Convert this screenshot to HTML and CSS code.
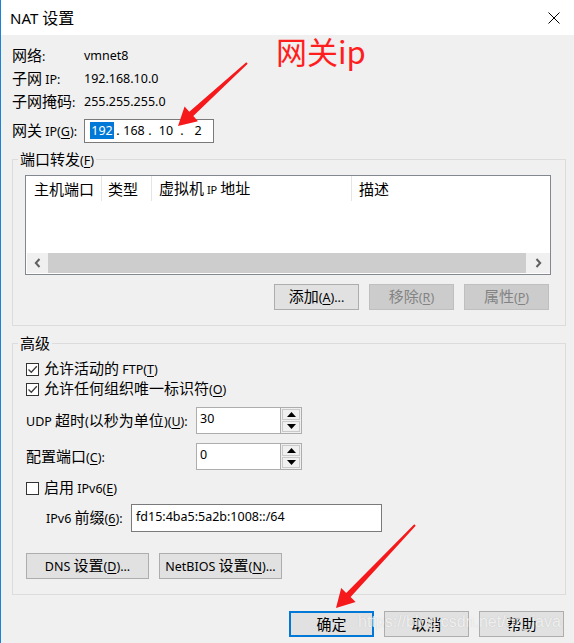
FILE: index.html
```html
<!DOCTYPE html>
<html lang="zh-CN">
<head>
<meta charset="utf-8">
<title>NAT 设置</title>
<link rel="stylesheet" href="styles.css">
</head>
<body>
<div class="win">
  <div class="titlebar">
    <span class="title">NAT <span class="ct">设置</span></span>
    <svg class="close" width="12" height="12" viewBox="0 0 12 12"><path d="M0.5 0.5 L11.5 11.5 M11.5 0.5 L0.5 11.5" stroke="#000" stroke-width="1" fill="none"/></svg>
  </div>

  <div class="info">
    <div class="row"><span class="lbl"><span class="c">网络</span>:</span><span>vmnet8</span></div>
    <div class="row"><span class="lbl"><span class="c">子网</span> IP:</span><span>192.168.10.0</span></div>
    <div class="row"><span class="lbl"><span class="c">子网掩码</span>:</span><span>255.255.255.0</span></div>
    <div class="row gw">
      <span class="lbl"><span class="c">网关</span> IP(<u>G</u>):</span>
      <div class="ipbox">
        <span class="oct"><span class="sel">192</span></span><span class="dot">.</span>
        <span class="oct">168</span><span class="dot">.</span>
        <span class="oct">10</span><span class="dot">.</span>
        <span class="oct">2</span>
      </div>
    </div>
  </div>

  <fieldset class="group g1">
    <legend><span class="c">端口转发</span>(<u>F</u>)</legend>
    <div class="gbody b1">
      <div class="list">
        <div class="lhead">
          <span class="col c1"><span class="c">主机端口</span></span>
          <span class="col c2"><span class="c">类型</span></span>
          <span class="col c3"><span><span class="c">虚拟机</span> IP <span class="c">地址</span></span></span>
          <span class="col c4"><span class="c">描述</span></span>
        </div>
        <div class="lspace"></div>
        <div class="hscroll">
          <span class="sbtn sl"><svg width="7" height="10" viewBox="0 0 7 10"><path d="M5.5 1 L1.8 5 L5.5 9" stroke="#606060" stroke-width="2" fill="none"/></svg></span>
          <span class="thumb"></span>
          <span class="sbtn sr"><svg width="7" height="10" viewBox="0 0 7 10"><path d="M1.5 1 L5.2 5 L1.5 9" stroke="#606060" stroke-width="2" fill="none"/></svg></span>
        </div>
      </div>
      <div class="btnrow">
        <span class="btn"><span><span class="c">添加</span>(<u>A</u>)...</span></span>
        <span class="btn dis"><span><span class="c">移除</span>(<u>R</u>)</span></span>
        <span class="btn dis"><span><span class="c">属性</span>(<u>P</u>)</span></span>
      </div>
    </div>
  </fieldset>

  <fieldset class="group g2">
    <legend><span class="c">高级</span></legend>
    <div class="gbody b2">
      <div class="chk r1"><span class="box"><svg width="11" height="11" viewBox="0 0 11 11"><path d="M1.5 5.5 L4.3 8.3 L9.8 2.2" stroke="#3c3c3c" stroke-width="1.3" fill="none"/></svg></span><span><span class="c">允许活动的</span> FTP(<u>T</u>)</span></div>
      <div class="chk"><span class="box"><svg width="11" height="11" viewBox="0 0 11 11"><path d="M1.5 5.5 L4.3 8.3 L9.8 2.2" stroke="#3c3c3c" stroke-width="1.3" fill="none"/></svg></span><span><span class="c">允许任何组织唯一标识符</span>(<u>O</u>)</span></div>
      <div class="srow s1">
        <span class="slbl">UDP <span class="c">超时</span>(<span class="c">以秒为单位</span>)(<u>U</u>):</span>
        <div class="spin">
          <span class="sval">30</span>
          <span class="sbtns">
            <span class="sb"><svg width="9" height="5" viewBox="0 0 9 5"><path d="M4.5 0 L9 5 L0 5 Z" fill="#000"/></svg></span>
            <span class="sb"><svg width="9" height="5" viewBox="0 0 9 5"><path d="M0 0 L9 0 L4.5 5 Z" fill="#000"/></svg></span>
          </span>
        </div>
      </div>
      <div class="srow s2">
        <span class="slbl"><span class="c">配置端口</span>(<u>C</u>):</span>
        <div class="spin">
          <span class="sval">0</span>
          <span class="sbtns">
            <span class="sb"><svg width="9" height="5" viewBox="0 0 9 5"><path d="M4.5 0 L9 5 L0 5 Z" fill="#000"/></svg></span>
            <span class="sb"><svg width="9" height="5" viewBox="0 0 9 5"><path d="M0 0 L9 0 L4.5 5 Z" fill="#000"/></svg></span>
          </span>
        </div>
      </div>
      <div class="chk r3"><span class="box"></span><span><span class="c">启用</span> IPv6(<u>E</u>)</span></div>
      <div class="v6row">
        <span class="v6lbl">IPv6 <span class="c">前缀</span>(<u>6</u>):</span>
        <div class="v6in">fd15:4ba5:5a2b:1008::/64</div>
      </div>
      <div class="dnsrow">
        <span class="btn wide"><span>DNS <span class="c">设置</span>(<u>D</u>)...</span></span>
        <span class="btn wide"><span>NetBIOS <span class="c">设置</span>(<u>N</u>)...</span></span>
      </div>
    </div>
  </fieldset>

  <div class="footer">
    <span class="btn def"><span class="c">确定</span></span>
    <span class="btn"><span class="c">取消</span></span>
    <span class="btn"><span class="c">帮助</span></span>
  </div>

  <div class="note">网关ip</div>
  <div class="wm">https://blog.csdn.net/gz_java</div>
  <svg class="arrows" width="574" height="643" viewBox="0 0 574 643">
    <polygon fill="#f5191c" points="247.7,63.7 193.3,116.1 198.0,121.3 178,126 184.6,106.5 189.3,111.7 246.3,62.3"/>
    <polygon fill="#f5191c" points="415.7,525.7 350.6,597.1 355.6,601.9 336,608 341.2,588.1 346.2,592.9 414.3,524.3"/>
  </svg>
</div>
</body>
</html>
```

FILE: styles.css
```css
html, body {
  margin: 0;
  padding: 0;
}
body {
  font-family: "Noto Sans", "Noto Sans CJK SC", sans-serif;
  font-size: 12.5px;
  line-height: 16px;
  color: #000;
  background: #f0f0f0;
}
.c {
  font-family: "Noto Sans CJK SC", sans-serif;
  font-size: 15px;
  line-height: 16px;
}
u {
  text-decoration: underline;
  text-underline-offset: 2px;
}
.win {
  position: relative;
  width: 574px;
  height: 643px;
  box-sizing: border-box;
  border-left: 1px solid #1883d7;
  background: #f0f0f0;
  overflow: hidden;
}
.titlebar {
  height: 35px;
  background: #fff;
  display: flex;
  align-items: center;
  padding-left: 9px;
  padding-right: 14px;
}
.title {
  font-size: 15px;
  line-height: 20px;
}
.ct {
  font-family: "Noto Sans CJK SC", sans-serif;
  font-size: 16px;
}
.close {
  margin-left: auto;
  display: block;
}
.info {
  padding: 9px 0 0 11px;
}
.row {
  display: flex;
  align-items: center;
  height: 23px;
}
.lbl {
  width: 72px;
  white-space: nowrap;
}
.row.gw {
  margin-top: 6px;
  height: 24px;
}
.ipbox {
  width: 130px;
  height: 24px;
  box-sizing: border-box;
  border: 1px solid #7a7a7a;
  background: #fff;
  display: flex;
  align-items: center;
  padding-left: 3px;
}
.oct {
  width: 28px;
  text-align: center;
}
.sel {
  background: #0078d7;
  color: #fff;
  padding: 0 1px;
}
.dot {
  width: 4px;
  text-align: center;
}
.group {
  margin: 0 0 0 11px;
  padding: 0;
  width: 554px;
  box-sizing: border-box;
  border: 1px solid #dcdcdc;
  min-width: 0;
}
.group legend {
  margin-left: 5px;
  padding: 0 2px;
  line-height: 16px;
  height: 16px;
}
.g1 {
  margin-top: 8px;
}
.g2 {
  margin-top: 9px;
}
.b1 {
  padding: 8px 15px 15px 12px;
}
.list {
  width: 526px;
  height: 100px;
  box-sizing: border-box;
  border: 1px solid #828790;
  background: #fff;
  display: flex;
  flex-direction: column;
}
.lhead {
  display: flex;
  height: 25px;
}
.col {
  display: flex;
  align-items: center;
  padding-left: 7px;
  box-sizing: border-box;
  border-right: 1px solid #e5e5e5;
  white-space: nowrap;
}
.col.c1 { width: 76px; padding-left: 8px; }
.col.c2 { width: 50px; padding-left: 6px; }
.col.c3 { width: 200px; font-size: 11px; }
.col.c4 { flex: 1; border-right: none; }
.lspace {
  flex: 1;
}
.hscroll {
  display: flex;
  height: 20px;
  margin: 0 0 1px 1px;
}
.sbtn {
  background: #f0f0f0;
  display: flex;
  align-items: center;
  justify-content: center;
}
.sl { width: 21px; }
.sr { width: 24px; }
.thumb {
  flex: 1;
  background: #cdcdcd;
}
.btnrow {
  display: flex;
  justify-content: flex-end;
  gap: 10px;
  margin-top: 9px;
  margin-right: 1px;
}
.btn {
  width: 85px;
  height: 26px;
  box-sizing: border-box;
  border: 1px solid #adadad;
  background: #e1e1e1;
  display: flex;
  align-items: center;
  justify-content: center;
  white-space: nowrap;
}
.btn.dis {
  background: #cccccc;
  border-color: #bfbfbf;
  color: #838383;
}
.btn.def {
  border: 2px solid #0078d7;
}
.b2 {
  padding: 8px 13px 15px 13px;
}
.chk {
  display: flex;
  align-items: center;
  height: 20px;
  gap: 5px;
  white-space: nowrap;
}
.box {
  width: 13px;
  height: 13px;
  box-sizing: border-box;
  border: 1px solid #333;
  background: #fff;
  display: flex;
  align-items: center;
  justify-content: center;
}
.srow {
  display: flex;
  align-items: center;
  height: 27px;
}
.s1 { margin-top: 8px; }
.s2 { margin-top: 9px; }
.slbl {
  width: 170px;
  white-space: nowrap;
}
.spin {
  width: 106px;
  height: 27px;
  display: flex;
  box-sizing: border-box;
  border: 1px solid #adadad;
  background: #fff;
}
.sval {
  flex: 1;
  padding: 3px 0 0 3px;
  border-right: 1px solid #adadad;
}
.sbtns {
  width: 20px;
  display: flex;
  flex-direction: column;
  background: #f0f0f0;
  padding: 1px;
  box-sizing: border-box;
  gap: 1px;
}
.sb {
  flex: 1;
  border: 1px solid #c9c9c9;
  background: #f0f0f0;
  display: flex;
  align-items: center;
  justify-content: center;
}
.chk.r3 {
  margin-top: 8px;
}
.v6row {
  display: flex;
  align-items: center;
  margin-top: 6px;
  height: 28px;
}
.v6lbl {
  margin-left: 20px;
  width: 85px;
  white-space: nowrap;
}
.v6in {
  width: 251px;
  height: 28px;
  box-sizing: border-box;
  border: 1px solid #7a7a7a;
  background: #fff;
  padding: 4px 0 0 4px;
}
.dnsrow {
  display: flex;
  gap: 10px;
  margin-top: 21px;
}
.btn.wide {
  width: 123px;
}
.footer {
  display: flex;
  justify-content: flex-end;
  gap: 10px;
  margin-top: 16px;
  margin-right: 10px;
}
.note {
  position: absolute;
  left: 275px;
  top: 30px;
  font-family: "Noto Sans CJK SC", sans-serif;
  font-size: 31px;
  line-height: 42px;
  color: #ff1e1e;
}
.wm {
  position: absolute;
  left: 357px;
  top: 612px;
  font-family: "Liberation Sans", sans-serif;
  font-size: 16px;
  line-height: 20px;
  color: rgba(255, 255, 255, 0.75);
  text-shadow: 0 0 1px rgba(120, 120, 120, 0.35);
  pointer-events: none;
}
.arrows {
  position: absolute;
  left: -1px;
  top: 0;
  pointer-events: none;
}
```
